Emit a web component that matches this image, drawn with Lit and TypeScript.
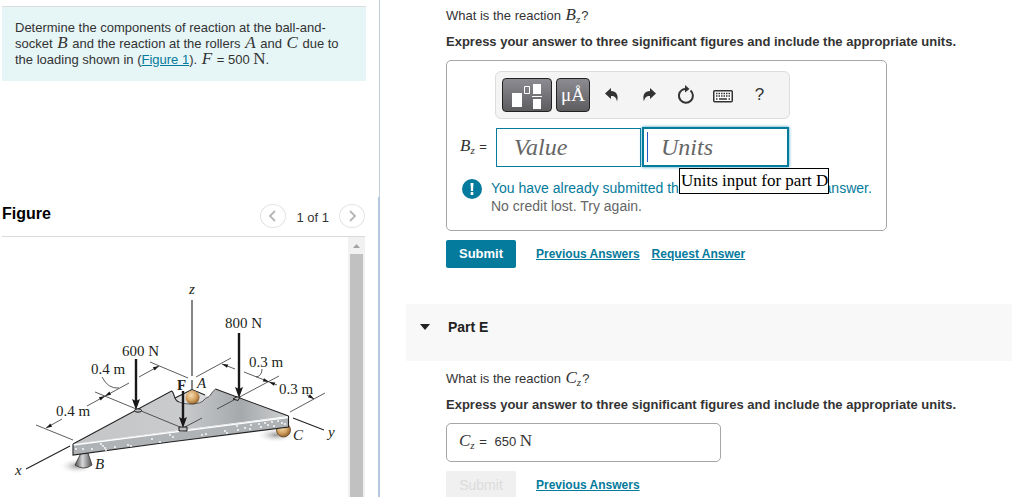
import { LitElement, html, css, svg } from "lit";
import { customElement, property } from "lit/decorators.js";

@customElement("figure-drawing")
class FigureDrawing extends LitElement {
  static styles = css`
    :host { display: block; }
    svg { display: block; }
    text { font-family: "Liberation Serif", serif; font-size: 15px; fill: #231f20; }
    .it { font-style: italic; }
    .bold { font-weight: bold; }
    .thin { stroke: #333; stroke-width: 0.8; fill: none; }
    .axis { stroke: #222; stroke-width: 1.1; fill: none; }
    .force { stroke: #1a1718; stroke-width: 2.4; }
    .head { fill: #1a1718; }
    .pad { fill: #b9bbbd; stroke: #1a1718; stroke-width: 1; }
  `;

  private force(x: number, top: number, tip: number) {
    return svg`
      <line class="force" x1=${x} y1=${top} x2=${x} y2=${tip - 8}></line>
      <path class="head" d="M${x - 4} ${tip - 11} L${x} ${tip - 9} L${x + 4} ${tip - 11} L${x} ${tip} Z"></path>`;
  }

  private tip(x: number, y: number, angle: number) {
    return svg`<path class="head" transform="translate(${x} ${y}) rotate(${angle})" d="M0 0 L-6 -1.8 L-6 1.8 Z"></path>`;
  }

  render() {
    const specks = [
      [76, 449], [83, 449], [92, 449], [101, 444], [103, 446], [105, 448], [106, 450], [115, 447],
      [128, 445], [131, 446], [152, 439], [160, 442], [170, 435], [173, 437], [202, 435], [206, 434],
      [225, 431], [227, 433], [237, 426], [238, 430], [245, 428], [250, 429], [251, 425], [259, 424],
      [261, 427], [265, 423], [268, 425], [272, 422], [274, 426], [278, 421], [282, 423], [285, 424],
    ];
    return html`
      <svg width="340" height="259" viewBox="0 238 340 259" role="img" aria-label="Triangular plate with loads">
        <defs>
          <linearGradient id="top" x1="0" y1="0" x2="1" y2="0">
            <stop offset="0" stop-color="#c3c5c7"></stop>
            <stop offset="0.5" stop-color="#c9cbcd"></stop>
            <stop offset="0.78" stop-color="#a6a9ac"></stop>
            <stop offset="1" stop-color="#cfd1d2"></stop>
          </linearGradient>
          <radialGradient id="ball" cx="0.4" cy="0.35" r="0.7">
            <stop offset="0" stop-color="#f3dcb4"></stop>
            <stop offset="0.5" stop-color="#d9a766"></stop>
            <stop offset="1" stop-color="#8a5a28"></stop>
          </radialGradient>
          <radialGradient id="shade">
            <stop offset="0" stop-color="#999"></stop>
            <stop offset="1" stop-color="#fff" stop-opacity="0"></stop>
          </radialGradient>
          <linearGradient id="cone" x1="0" y1="0" x2="1" y2="0">
            <stop offset="0" stop-color="#4d4d4f"></stop>
            <stop offset="0.45" stop-color="#d6d7d8"></stop>
            <stop offset="1" stop-color="#4d4d4f"></stop>
          </linearGradient>
        </defs>

        <ellipse cx="77" cy="466" rx="18" ry="8" fill="url(#shade)"></ellipse>
        <ellipse cx="276" cy="435" rx="20" ry="8" fill="url(#shade)"></ellipse>

        <path class="axis" d="M192 300 V376"></path>
        <path class="axis" d="M192 380 V391"></path>
        <path class="axis" d="M70 446 L26 469"></path>
        <path class="axis" d="M293 418 L324 430"></path>

        <path d="M81 453 H88 L92 465 Q84 471 75 465 Z" fill="url(#cone)" stroke="#333" stroke-width="0.8"></path>
        <circle cx="283.500" cy="430" r="7" fill="url(#ball)" stroke="#5e4020" stroke-width="0.8"></circle>

        <path d="M171 400 L176 397 L192 389 L206 395 L212 400 L190 408 Z" fill="#dadbdc"></path>
        <path class="axis" d="M175 398 L192 389.500 L205 395"></path>
        <path d="M73 444 L171.500 391 C175 392 173 401 179 402 C186 406 200 406 204 400 C206 397 209 398 211 394 Q213 391 215.500 389 L288.500 416 L73 444 Z" fill="url(#top)"></path>
        <circle cx="192.500" cy="397.500" r="7" fill="url(#ball)"></circle>
        <path class="axis" d="M73 444 L171.500 391 C175 392 173 401 179 402"></path>
        <path class="axis" d="M215.500 389 L288.500 416"></path>
        <path class="thin" d="M179 402 C186 405 200 405 204 400 C206 397 209 398 211 394 Q213 391 215.500 389"></path>

        <path d="M73 444 L288.500 417 V427 L170 442 L73 455 Z" fill="#afb3b6"></path>
        <path d="M73 445 L288 417.500" stroke="#fff" stroke-width="1.400"></path>
        <path class="axis" d="M73 444 V455 L170 442 L288.500 427 V416"></path>
        ${specks.map(([x, y]) => svg`<circle cx=${x} cy=${y} r="0.9" fill="#fff"></circle>`)}

        <path class="thin" d="M95 392 L180 427"></path>
        <path class="thin" d="M36 425 L73 440"></path>
        <path class="thin" d="M150 362 L188 378"></path>
        <path class="thin" d="M159 366 L139 377 M129 383 L87 406 M62 419 L46 428"></path>
        <path class="thin" d="M102 377 Q108 389 119 388"></path>
        <path class="thin" d="M196 377 L231 358"></path>
        <path class="thin" d="M222 364 L235 369 M244 372 L277 385 M307 395 L314 399"></path>
        <path class="thin" d="M262 369 Q262 376 256 377"></path>
        <path class="thin" d="M279 376 L217 409"></path>
        <path class="thin" d="M325 393 L290 412"></path>
        <path class="thin" d="M183 428 L202 418"></path>
        ${this.tip(159, 366, -29)} ${this.tip(105, 396, -29)} ${this.tip(105, 396, 151)}
        ${this.tip(46, 428, 151)} ${this.tip(222, 364, 201)} ${this.tip(269, 382, 21)}
        ${this.tip(269, 382, 201)} ${this.tip(314, 399, 33)}

        <ellipse class="pad" cx="138" cy="410.500" rx="3.500" ry="1.700"></ellipse>
        <path class="pad" d="M179 427 H187 V431 H179 Z"></path>
        <path class="pad" d="M233 399 L236 397 H240 L238 400.500 Z"></path>
        ${this.force(136, 359, 410)} ${this.force(183, 391, 428)} ${this.force(239, 333, 398)}

        <text class="it" x="189" y="294">z</text>
        <text x="225" y="328">800 N</text>
        <text x="122" y="356">600 N</text>
        <text x="91" y="374">0.4 m</text>
        <text x="249" y="367">0.3 m</text>
        <text x="56" y="416">0.4 m</text>
        <text x="279" y="394">0.3 m</text>
        <text class="bold" x="177" y="390">F</text>
        <text class="it" x="197" y="388">A</text>
        <text class="it" x="95" y="469">B</text>
        <text class="it" x="293" y="440">C</text>
        <text class="it" x="15" y="475">x</text>
        <text class="it" x="328" y="437">y</text>
      </svg>`;
  }
}

@customElement("part-question")
class PartQuestion extends LitElement {
  @property() symbol = "";
  static styles = css`
    :host { display: block; color: #333; }
    p { margin: 0; line-height: 20px; }
    .ask { margin-bottom: 6px; }
    .how { font-weight: bold; }
    i { font: italic 17px/16px "Liberation Serif", serif; margin: 0 1px; }
    sub { font-size: 11px; line-height: 0; vertical-align: -3px; }
  `;
  render() {
    return html`
      <p class="ask">What is the reaction <i>${this.symbol}<sub>z</sub></i>?</p>
      <p class="how">Express your answer to three significant figures and include the appropriate units.</p>`;
  }
}

@customElement("app-root")
class AppRoot extends LitElement {
  static styles = css`
    :host {
      display: block;
      font: 13px/16px "Liberation Sans", Arial, sans-serif;
      color: #333;
      background: #fff;
    }
    * { box-sizing: border-box; }
    button { font: inherit; margin: 0; padding: 0; border: 0; background: none; color: inherit; }
    a { color: #047a9c; }
    i, .roman { font-family: "Liberation Serif", serif; font-size: 17px; line-height: 0; }
    i { font-style: italic; margin: 0 1px; }
    sub { font-size: 11px; line-height: 0; vertical-align: -3px; }

    .page { display: grid; grid-template-columns: minmax(380px, 3fr) 5fr; height: 100vh; overflow: hidden; }
    .left { display: flex; flex-direction: column; min-height: 0; padding-left: 2px; }
    .upper { flex: 0 0 197px; padding: 6px 13px 0 0; border-right: 1px solid #c3cbdc; }
    .problem { background: #e6f5f6; border-top: 1px solid #d8dcdc; padding: 13px; }
    .problem p { margin: 0; }
    .lower { flex: 1; min-height: 0; display: flex; flex-direction: column; padding-right: 13px; border-right: 2px solid #b5c7dc; }
    .fighead { display: flex; align-items: center; padding: 3px 0 4px; height: 40px; border-bottom: 1px solid #d9d9d9; }
    h2 { margin: 0 auto 5px 0; font-size: 16px; line-height: 20px; color: #000; }
    .round { width: 26px; height: 24px; border: 1px solid #e4e4e4; border-radius: 50%; display: grid; place-items: center; }
    .count { margin: 3px 10px 0; }
    .view { flex: 1; min-height: 0; display: flex; justify-content: space-between; overflow: hidden; }
    .view figure-drawing { margin: 1px 0 0 -2px; }
    .track { flex: 0 0 17px; background: #f1f1f1; display: flex; flex-direction: column; align-items: center; }
    .track svg { flex: 0 0 17px; }
    .thumb { flex: 1; width: 13px; background: #c1c1c1; }

    .right { padding-left: 26px; overflow: hidden; min-width: 0; }
    .part { padding: 6px 40px 0; }
    .answer { margin-top: 8px; width: 441px; max-width: 100%; border: 1px solid #a6a6a6; border-radius: 5px; padding: 10px 14px 15px 12px; }
    .tools { display: flex; align-items: center; width: 295px; height: 48px; margin-left: 36px; padding: 0 6px; background: #f4f4f4; border: 1px solid #dcdcdc; border-radius: 6px; }
    .dark { height: 34px; border: 1px solid #222; border-radius: 4px; background: linear-gradient(#8c8c92, #5d5d60); color: #fff; display: grid; place-items: center; }
    .tpl { width: 50px; margin-right: 4px; }
    .mu { width: 34px; font: 19px/24px "Liberation Serif", serif; margin-right: 3px; }
    .tool { width: 37px; height: 34px; display: grid; place-items: center; }
    .help { font-size: 17px; }
    .fields { display: flex; align-items: center; margin-top: 8px; height: 40px; }
    .fields label { width: 37px; white-space: nowrap; }
    .value, .units { width: 145px; height: 39px; border: 1px solid #047a9c; padding: 0 17px; font: italic 24px "Liberation Serif", serif; color: #333; border-radius: 0; outline: 0; background: #fff; display: block; }
    .units { width: 147px; height: 40px; border-width: 2px; box-shadow: 0 0 3px #2c9dbd; }
    input::placeholder { color: #666; opacity: 1; }
    .unitbox { position: relative; margin-left: 1px; }
    .unitbox::before { content: ""; position: absolute; left: 5px; top: 5px; height: 30px; width: 1px; background: #2b56c6; }
    .tip { position: absolute; left: 37px; top: 41px; padding: 2px 0 2px 1px; white-space: nowrap; border: 1px solid #000; background: #fff; color: #000; font: 17px/20px "Liberation Serif", serif; }
    .alert { display: flex; gap: 9px; margin-top: 12px; padding-left: 3px; line-height: 18px; font-size: 14px; color: #666; }
    .alert p { margin: 0; white-space: nowrap; }
    .alert strong { font-weight: normal; color: #047a9c; }
    .actions { display: flex; align-items: center; margin-top: 9px; font-size: 12px; font-weight: bold; }
    .actions a { margin-right: 12px; }
    .submit { width: 70px; height: 28px; margin-right: 20px; border-radius: 2px; background: #047a9c; color: #fff; font-size: 13px; }
    .submit:disabled { background: #f0f0f0; color: #dcdcdc; font-weight: normal; font-size: 14px; }
    .parthead { display: flex; align-items: center; gap: 18px; height: 57px; margin-top: 36px; padding: 0 14px 12px; background: #f8f8f8; }
    h3 { margin: 0; font-size: 14px; color: #222; }
    .second { padding-top: 8px; }
    .result { margin-top: 8px; width: 275px; height: 39px; border: 1px solid #a6a6a6; border-radius: 5px; padding: 10px 11px; }
    .result .n { margin-left: 4px; }
  `;

  render() {
    return html`
      <main class="page">
        <section class="left">
          <div class="upper">
            <div class="problem">
              <p>Determine the components of reaction at the ball-and-socket <i>B</i> and the reaction at the rollers <i>A</i> and <i>C</i> due to the loading shown in (<a href="#figure">Figure 1</a>). <i>F</i> = 500 <span class="roman">N</span>.</p>
            </div>
          </div>
          <div class="lower" id="figure">
            <div class="fighead">
              <h2>Figure</h2>
              <button class="round" aria-label="Previous figure"><svg width="10" height="12" viewBox="0 0 10 12" fill="none" stroke="#b5b5b5" stroke-width="1.800"><path d="M7 1 L2 6 L7 11"></path></svg></button>
              <span class="count">1 of 1</span>
              <button class="round" aria-label="Next figure"><svg width="10" height="12" viewBox="0 0 10 12" fill="none" stroke="#b5b5b5" stroke-width="1.800"><path d="M3 1 L8 6 L3 11"></path></svg></button>
            </div>
            <div class="view">
              <figure-drawing></figure-drawing>
              <div class="track">
                <svg width="17" height="17"><path d="M5 11 L8.500 7 L12 11 Z" fill="#a3a3a3"></path></svg>
                <div class="thumb"></div>
              </div>
            </div>
          </div>
        </section>

        <section class="right">
          <div class="part">
            <part-question symbol="B"></part-question>
            <div class="answer">
              <div class="tools">
                <button class="dark tpl" aria-label="Templates">
                  <svg width="34" height="28" viewBox="0 0 34 28"><path fill="#fff" d="M2 12H12V26H2ZM23 3H31V13H23ZM22 15H32V16H22ZM23 18H31V28H23Z"></path><path fill="none" stroke="#fff" d="M14.500 5.500H19.500V12.500H14.500Z"></path></svg>
                </button>
                <button class="dark mu" aria-label="Units symbols">μÅ</button>
                <button class="tool" aria-label="Undo"><svg width="16" height="16" viewBox="0 0 16 16"><path fill="#333" d="M1 6.500 L7 1 V4 C12 4 15 8 13 14.500 C12.500 11 11 9 7 9 V12 Z"></path></svg></button>
                <button class="tool" aria-label="Redo"><svg width="16" height="16" viewBox="0 0 16 16"><path fill="#333" d="M15 6.500 L9 1 V4 C4 4 1 8 3 14.500 C3.500 11 5 9 9 9 V12 Z"></path></svg></button>
                <button class="tool" aria-label="Reset"><svg width="18" height="20" viewBox="0 0 18 20"><path fill="none" stroke="#333" stroke-width="2" d="M13.500 5.500 A7 7 0 1 1 5 5 Q7 3.600 10 4"></path><path fill="#333" d="M8 0 L12.500 4 L8 7.500 Z"></path></svg></button>
                <button class="tool" aria-label="Keyboard"><svg width="20" height="16" viewBox="0 0 20 16"><rect x="0.750" y="3.750" width="18.500" height="11" rx="1" fill="#fff" stroke="#333" stroke-width="1.500"></rect><path stroke="#333" stroke-width="1.500" fill="none" stroke-dasharray="1.500 1" d="M3 6.500H17M3 9H17"></path><path stroke="#333" stroke-width="1.500" d="M3 12H4.500M6 12H14M15.500 12H17"></path></svg></button>
                <button class="tool help" aria-label="Help">?</button>
              </div>
              <div class="fields">
                <label for="value"><i>B<sub>z</sub></i> =</label>
                <input class="value" id="value" placeholder="Value">
                <div class="unitbox">
                  <input class="units" aria-label="Units input for part D" placeholder="Units">
                  <div class="tip" role="tooltip">Units input for part D</div>
                </div>
              </div>
              <div class="alert">
                <svg width="20" height="20" viewBox="0 0 20 20"><circle cx="10" cy="10" r="10" fill="#047a9c"></circle><path d="M8.500 4H11.500L11 12H9Z M8.700 13H11.300V16H8.700Z" fill="#fff"></path></svg>
                <p><strong>You have already submitted this answer. Enter a new answer.</strong><br>No credit lost. Try again.</p>
              </div>
            </div>
            <div class="actions">
              <button class="submit">Submit</button>
              <a href="#previous-d">Previous Answers</a>
              <a href="#request-d">Request Answer</a>
            </div>
          </div>
          <div class="parthead">
            <svg width="10" height="6"><path d="M0 0H10L5 6Z" fill="#222"></path></svg>
            <h3>Part E</h3>
          </div>
          <div class="part second">
            <part-question symbol="C"></part-question>
            <div class="result"><i>C<sub>z</sub></i> = <span class="n">650</span> <span class="roman">N</span></div>
            <div class="actions">
              <button class="submit" disabled>Submit</button>
              <a href="#previous-e">Previous Answers</a>
            </div>
          </div>
        </section>
      </main>`;
  }
}
